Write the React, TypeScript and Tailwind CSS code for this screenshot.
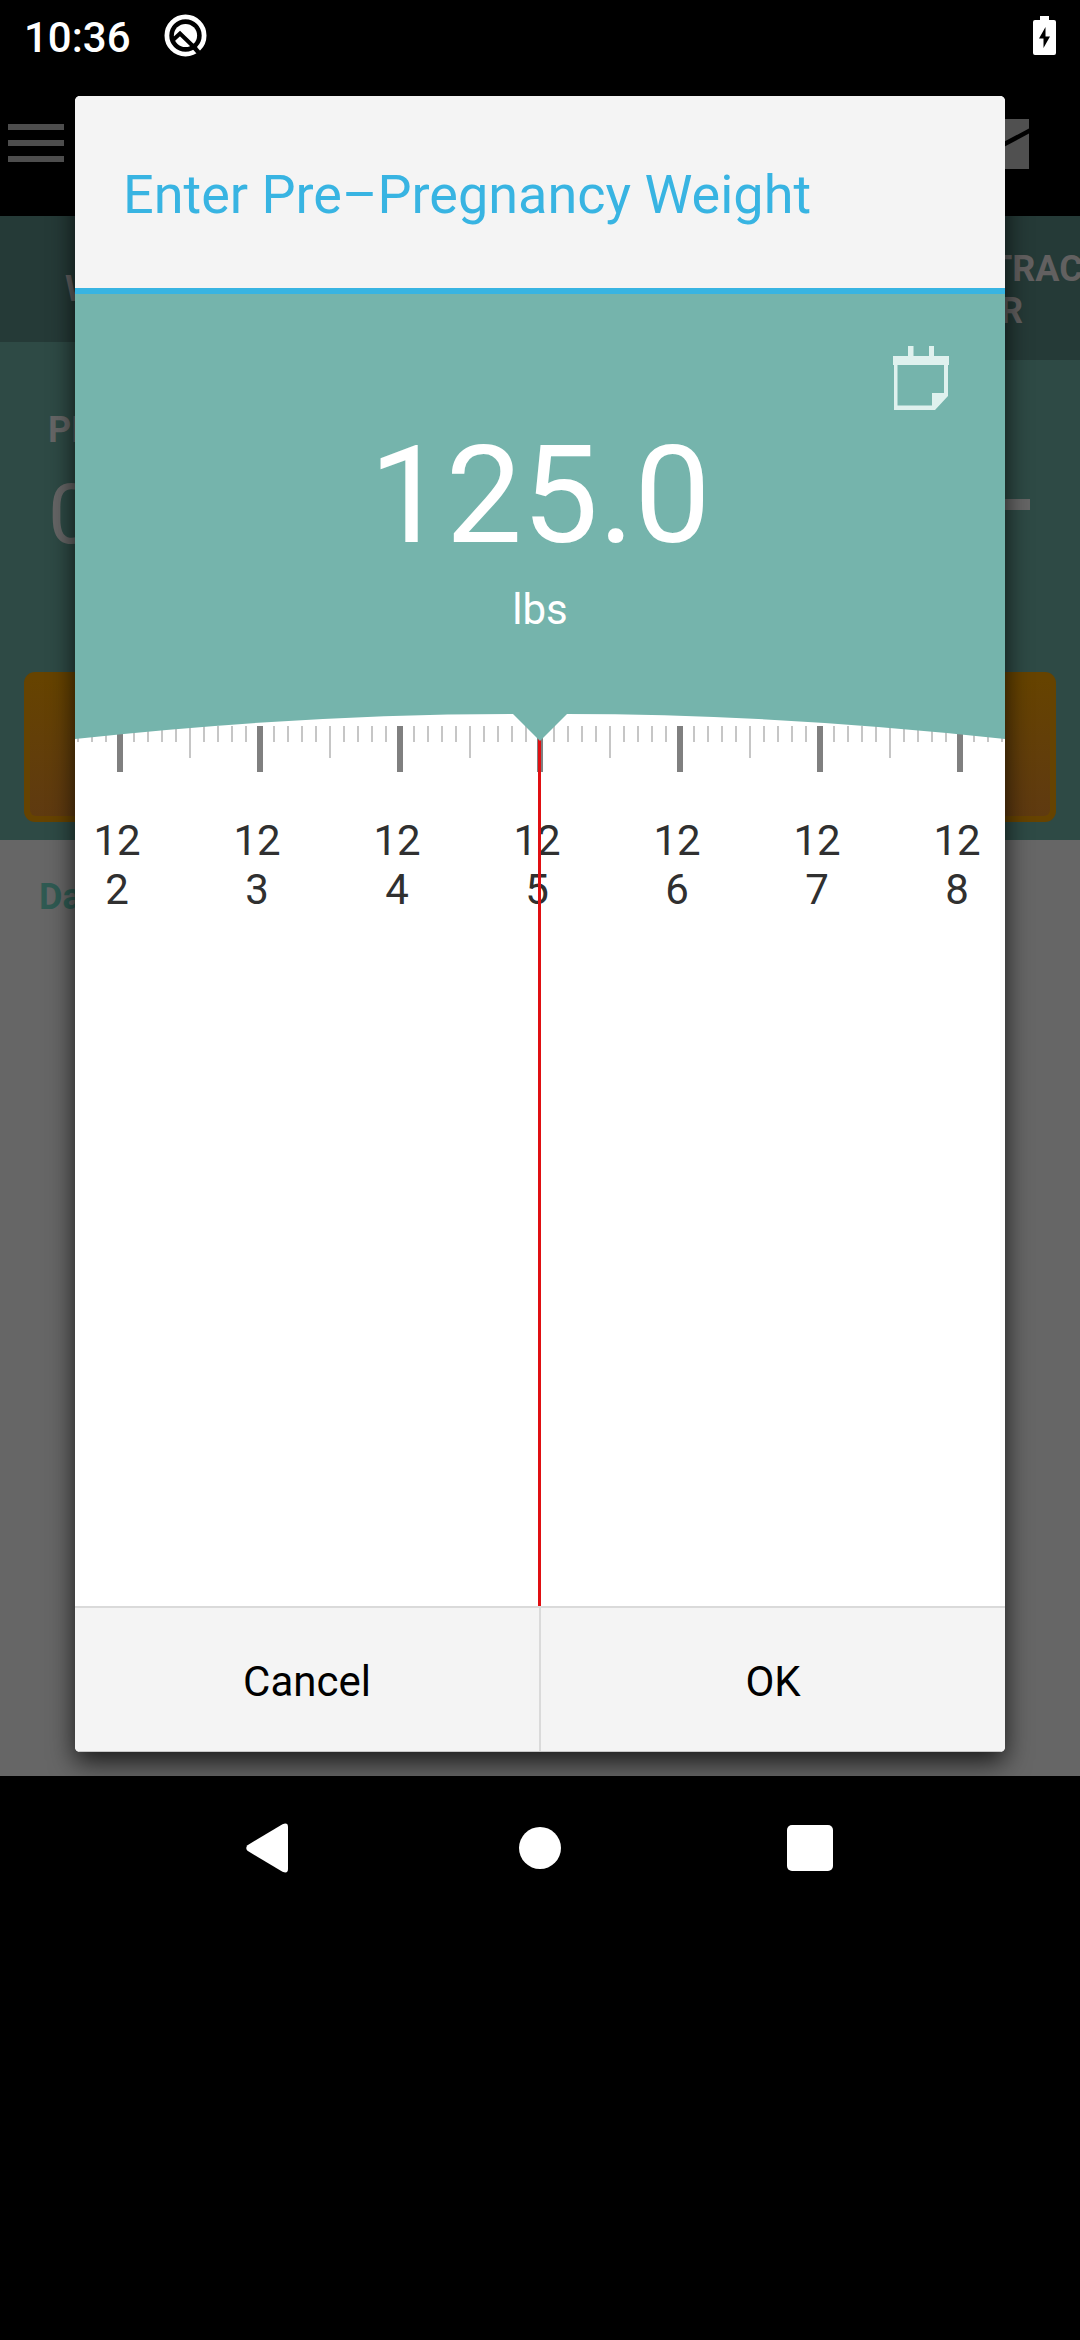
const TICKS = Array.from({ length: 67 }, (_, i) => i - 33);
const LABELS = ["2", "3", "4", "5", "6", "7", "8"];

function StatusBar() {
  return (
    <div className="flex h-[72px] items-start justify-between bg-black pl-6 pr-6">
      <div className="flex items-start">
        <span className="w-[140px] pt-[13px] text-[42px] font-medium leading-[49px] text-white">10:36</span>
        <svg className="mt-[14px]" width="43" height="43" viewBox="0 0 43 43">
          <circle cx="21.5" cy="21.5" r="18.6" fill="none" stroke="#fff" strokeWidth="4.8" />
          <circle cx="21.5" cy="21.5" r="11.6" fill="#fff" />
          <path d="M9 26L16 19.500L32 35" fill="none" stroke="#000" strokeWidth="4" />
          <path d="M28 31L36 40" stroke="#000" strokeWidth="4.500" />
        </svg>
      </div>
      <svg className="mt-4" width="23" height="39" viewBox="0 0 23 39">
        <path d="M7 0h9v4h5a2 2 0 0 1 2 2v31a2 2 0 0 1-2 2H2a2 2 0 0 1-2-2V6a2 2 0 0 1 2-2h5z" fill="#fff" />
        <path d="M12.500 11v9.500H17L10.500 32v-9.500H6z" fill="#000" />
      </svg>
    </div>
  );
}

function AppBar() {
  return (
    <div className="flex h-36 items-start justify-between bg-black pl-2 pr-[51px]">
      <div className="flex flex-col gap-[10px] pt-[52px]">
        <div className="h-[6px] w-14 bg-[#4d4d4d]" />
        <div className="h-[6px] w-14 bg-[#4d4d4d]" />
        <div className="h-[6px] w-14 bg-[#4d4d4d]" />
      </div>
      <svg className="mt-[47px]" width="75" height="50" viewBox="0 0 75 50">
        <path d="M0 0h75v50H0z" fill="#505050" />
        <path d="M-1 12L37.500 32L76 11.500" fill="none" stroke="#000" strokeWidth="4.500" />
      </svg>
    </div>
  );
}

function Page() {
  return (
    <div className="h-[1560px] overflow-hidden bg-[#666]">
      <div className="h-[624px] bg-[#2e4a45]">
        <div className="flex items-start justify-between text-[36px] font-bold leading-[42px] text-[#626060]">
          <div className="h-[126px] w-[540px] bg-[#253a37] pl-[65px] pt-[52px]">W</div>
          <div className="flex h-36 w-[540px] flex-col overflow-hidden bg-[#253a37] pt-[32px]">
            <span className="pl-[450px]">TRAC</span>
            <span className="pl-[460px]">R</span>
          </div>
        </div>
        <div className="flex h-[312px] justify-between pl-12 pr-[50px] text-[#666]">
          <div className="flex flex-col pt-[49px]">
            <span className="text-[36px] font-bold leading-[42px]">PRE</span>
            <span className="mt-[15px] text-[84px] leading-[98px]">0</span>
          </div>
          <div className="mt-[139px] h-[11px] w-12 bg-[#666]" />
        </div>
        <div className="mx-6 h-[150px] rounded-[11px] bg-[#664300] p-[6px]">
          <div className="h-full rounded-[6px] bg-gradient-to-b from-[#664300] to-[#5f3a10]" />
        </div>
      </div>
      <div className="pl-[39px] pt-[36px] text-[36px] font-bold leading-[42px] text-[#2f5a52]">Date</div>
    </div>
  );
}

function NavBar() {
  return (
    <div className="flex h-[144px] items-start bg-black">
      <svg className="ml-[246px] mt-[47px]" width="42" height="50" viewBox="0 0 42 50">
        <path d="M1.500 22.200L36.500 1.300Q42 -1 42 4V46Q42 51 36.500 48.700L1.500 27.800Q-1 25 1.500 22.200z" fill="#fff" />
      </svg>
      <div className="ml-[231px] mt-[51px] size-[42px] rounded-full bg-white" />
      <div className="ml-[226px] mt-[49px] size-[46px] rounded-[5px] bg-white" />
    </div>
  );
}

function CalendarIcon() {
  return (
    <svg className="absolute left-[818px] top-[52px]" width="57" height="64" viewBox="0 0 57 64">
      <g fill="#dff1ee">
        <path d="M15 0h5.500v10H15zM36 0h5v10h-5zM0 10h56v9H0z" />
        <path fillRule="evenodd" d="M1 18H55V50L42 64H1zM4.500 19V59.500H39V47H51V19z" />
      </g>
    </svg>
  );
}

function Ruler() {
  return (
    <svg className="block" width="930" height="100" viewBox="0 0 930 100">
      {TICKS.map((t) => {
        const x = 465 + t * 14;
        if (t % 10 === 0) return <rect key={t} x={x - 3} y="24" width="6" height="46" fill="#808080" />;
        return <rect key={t} x={x - 1} y="24" width="2" height={t % 5 === 0 ? 32 : 16} fill="#c6c6c6" />;
      })}
      <rect x="463" y="36" width="3" height="64" fill="#e00f12" />
      <path d="M0 0H930V37Q700 12 492 12L465 39L438 12Q230 12 0 37z" fill="#75b4ac" />
    </svg>
  );
}

function Dialog() {
  return (
    <div className="absolute left-[75px] top-[96px] flex h-[1656px] w-[930px] flex-col overflow-hidden rounded-[5px] bg-white">
      <div className="flex h-[198px] items-center border-b-[6px] border-[#38b4e2] bg-[#f4f4f4] pl-12 pt-[5px] text-[54px] text-[#38b4e2]">
        <span className="whitespace-nowrap">Enter Pre–Pregnancy Weight</span>
      </div>
      <div className="relative flex h-[408px] flex-col items-center bg-[#75b4ac] text-white">
        <CalendarIcon />
        <span className="mt-[122px] text-[136px] leading-[160px]">125.0</span>
        <span className="mt-[9px] text-[42px] leading-[50px]">lbs</span>
      </div>
      <Ruler />
      <div className="relative flex-1">
        <div className="-ml-7 grid w-[980px] grid-cols-7 pt-[14px] text-center text-[42px] leading-[49px] text-[#303030]">
          {LABELS.map((n) => (
            <div key={n} className="flex flex-col">
              <span>12</span>
              <span>{n}</span>
            </div>
          ))}
        </div>
        <div className="absolute bottom-0 left-[463px] top-0 w-[3px] bg-[#e00f12]" />
      </div>
      <div className="grid h-[146px] grid-cols-2 border-b border-t-2 border-b-[#c8c8c8] border-t-[#dadada] bg-[#f4f4f4] text-[42px] text-black">
        <button className="border-r border-[#dadada] pt-1">Cancel</button>
        <button className="border-l border-[#dadada] pt-1">OK</button>
      </div>
    </div>
  );
}

export default function App() {
  return (
    <div className="relative flex h-[2340px] w-[1080px] flex-col overflow-hidden bg-black font-['Roboto',sans-serif]">
      <StatusBar />
      <AppBar />
      <div className="relative">
        <Page />
        <div className="absolute inset-0 overflow-hidden">
          <div className="absolute -top-[120px] left-[75px] h-[1656px] w-[930px] rounded-[5px] shadow-[0_10px_26px_rgba(0,0,0,0.75)]" />
        </div>
      </div>
      <NavBar />
      <Dialog />
    </div>
  );
}
